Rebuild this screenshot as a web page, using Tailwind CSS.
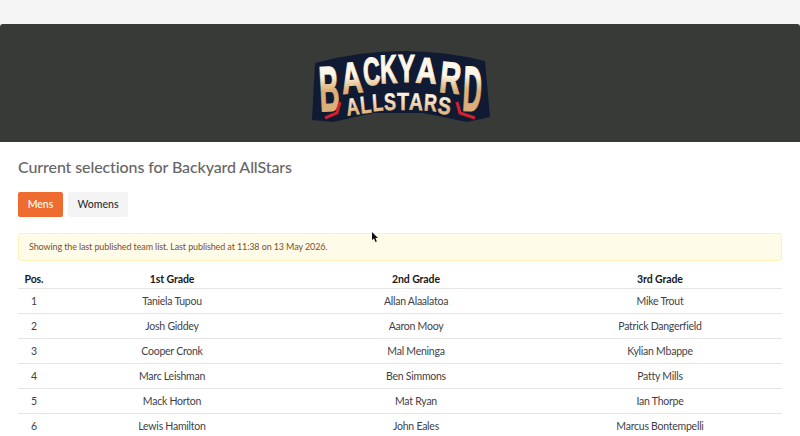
<!DOCTYPE html>
<html lang="en">
<head>
    <meta charset="UTF-8">
    <meta name="viewport" content="width=device-width, initial-scale=1.0">
    <title>Backyard AllStars</title>
    <script src="https://cdn.jsdelivr.net/npm/@tailwindcss/browser@4"></script>
</head>
<body class="relative h-[436px] overflow-hidden bg-[#f5f5f5] pt-6 font-['Lato',sans-serif]">
    <div class="h-[412px] overflow-hidden rounded-t-[3px] bg-white">
        <header class="flex h-[118px] items-center justify-center bg-[#383a37]">
            <svg width="200" height="110" viewBox="-10 -15 200 110">
                <defs>
                    <linearGradient id="gold" gradientUnits="userSpaceOnUse" x1="0" y1="26" x2="0" y2="48">
                        <stop offset="0.3" stop-color="#fdf8ea"/>
                        <stop offset="0.75" stop-color="#e8c595"/>
                        <stop offset="1" stop-color="#dcae78"/>
                    </linearGradient>
                    <linearGradient id="gold2" gradientUnits="userSpaceOnUse" x1="0" y1="50" x2="0" y2="70">
                        <stop offset="0.2" stop-color="#fbf1dc"/>
                        <stop offset="0.9" stop-color="#e3ba86"/>
                    </linearGradient>
                </defs>
                <path d="M5 20 Q90 -3 175 18 L180 74 L157 79 L113 70 L63 70 L23 79 L2 77 Z" fill="#101b33"/>
                <g font-family="'Liberation Sans',sans-serif" font-weight="700" fill="url(#gold)" stroke="url(#gold)" stroke-width="1.2">
                    <text x="9" y="68" font-size="64" textLength="20" lengthAdjust="spacingAndGlyphs" transform="rotate(-3 19 45)">B</text>
                    <text x="31" y="50" font-size="44" textLength="21" lengthAdjust="spacingAndGlyphs" transform="rotate(-6 41 34)">A</text>
                    <text x="53" y="42" font-size="39" textLength="17" lengthAdjust="spacingAndGlyphs" transform="rotate(-4 61 28)">C</text>
                    <text x="70" y="40" font-size="40" textLength="17" lengthAdjust="spacingAndGlyphs" transform="rotate(-2 78 25)">K</text>
                    <text x="88" y="39" font-size="39" textLength="17" lengthAdjust="spacingAndGlyphs">Y</text>
                    <text x="106" y="40" font-size="36" textLength="21" lengthAdjust="spacingAndGlyphs" transform="rotate(3 116 27)">A</text>
                    <text x="130" y="50" font-size="44" textLength="21" lengthAdjust="spacingAndGlyphs" transform="rotate(6 140 34)">R</text>
                    <text x="153" y="68" font-size="64" textLength="19" lengthAdjust="spacingAndGlyphs" transform="rotate(3 162 45)">D</text>
                </g>
                <path d="M35 53 Q90 42 145 53 L147 74 L113 70 L63 70 L33 74 Z" fill="#101b33"/>
                <path d="M30 59 L27 70 L15 75" fill="none" stroke="#d3202c" stroke-width="3"/>
                <path d="M147 59 L150 70 L165 75" fill="none" stroke="#d3202c" stroke-width="3"/>
                <g font-family="'Liberation Sans',sans-serif" font-weight="700" fill="url(#gold2)" stroke="url(#gold2)" stroke-width="0.5" font-size="24">
                    <text x="36" y="72" textLength="13" lengthAdjust="spacingAndGlyphs" transform="rotate(-8 42 63)">A</text>
                    <text x="50" y="70" textLength="11" lengthAdjust="spacingAndGlyphs" transform="rotate(-6 55 61)">L</text>
                    <text x="62" y="68" textLength="11" lengthAdjust="spacingAndGlyphs" transform="rotate(-4 67 59)">L</text>
                    <text x="74" y="67" textLength="12" lengthAdjust="spacingAndGlyphs" transform="rotate(-2 80 58)">S</text>
                    <text x="87" y="67" textLength="12" lengthAdjust="spacingAndGlyphs">T</text>
                    <text x="99" y="67" textLength="14" lengthAdjust="spacingAndGlyphs" transform="rotate(2 106 58)">A</text>
                    <text x="114" y="68" textLength="13" lengthAdjust="spacingAndGlyphs" transform="rotate(4 120 59)">R</text>
                    <text x="128" y="71" textLength="13" lengthAdjust="spacingAndGlyphs" transform="rotate(7 134 62)">S</text>
                </g>
            </svg>
        </header>

        <main class="px-[18px]">
            <h1 class="mt-[14px] text-[16px] leading-[22px] font-medium tracking-[-0.1px] text-[#666666]">Current selections for Backyard AllStars</h1>

            <div class="mt-[14px] flex gap-[5px]">
                <button class="h-[25px] w-[45px] rounded-[2px] bg-[#ee6c30] text-[10.5px] font-medium text-white">Mens</button>
                <button class="h-[25px] w-[60px] rounded-[2px] bg-[#f4f4f5] text-[10.5px] font-medium text-[#2b2f38]">Womens</button>
            </div>

            <div class="mt-[16px] flex h-[28px] items-center rounded-[3px] border border-[#fdf1b8] bg-[#fefce8] px-[10px] text-[9px] tracking-[-0.12px] text-[#80502c]">
                Showing the last published team list. Last published at 11:38 on 13 May 2026.
            </div>

            <table class="mt-[9px] w-full table-fixed text-center text-[10.5px] tracking-[-0.25px] text-[#3f3f46]">
                <thead>
                    <tr class="h-[18px] border-b border-[#e5e5e5] text-[10.5px] tracking-[-0.1px] text-[#18181b] [&_th]:pt-[2px]">
                        <th class="w-[32px] font-bold">Pos.</th>
                        <th class="font-bold">1st Grade</th>
                        <th class="font-bold">2nd Grade</th>
                        <th class="font-bold">3rd Grade</th>
                    </tr>
                </thead>
                <tbody class="[&_td]:pt-[2px]">
                    <tr class="h-[25px] border-b border-[#e5e5e5]"><td>1</td><td>Taniela Tupou</td><td>Allan Alaalatoa</td><td>Mike Trout</td></tr>
                    <tr class="h-[25px] border-b border-[#e5e5e5]"><td>2</td><td>Josh Giddey</td><td>Aaron Mooy</td><td>Patrick Dangerfield</td></tr>
                    <tr class="h-[25px] border-b border-[#e5e5e5]"><td>3</td><td>Cooper Cronk</td><td>Mal Meninga</td><td>Kylian Mbappe</td></tr>
                    <tr class="h-[25px] border-b border-[#e5e5e5]"><td>4</td><td>Marc Leishman</td><td>Ben Simmons</td><td>Patty Mills</td></tr>
                    <tr class="h-[25px] border-b border-[#e5e5e5]"><td>5</td><td>Mack Horton</td><td>Mat Ryan</td><td>Ian Thorpe</td></tr>
                    <tr class="h-[25px] border-b border-[#e5e5e5]"><td>6</td><td>Lewis Hamilton</td><td>John Eales</td><td>Marcus Bontempelli</td></tr>
                </tbody>
            </table>
        </main>
    </div>

    <svg class="absolute top-[232px] left-[372px]" width="7" height="11" viewBox="0 0 7 11">
        <path d="M0 0 L0 8 L2 6.5 L3.4 10 L4.8 9.4 L3.5 6 L6 6 Z" fill="#111"/>
    </svg>
</body>
</html>
